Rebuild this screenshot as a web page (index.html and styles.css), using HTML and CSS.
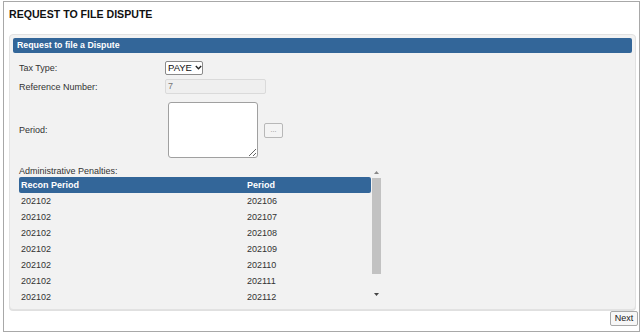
FILE: index.html
```html
<!DOCTYPE html>
<html>
<head>
<meta charset="utf-8">
<link rel="stylesheet" href="styles.css">
</head>
<body>
<div class="frame">
  <h1 class="title">REQUEST TO FILE DISPUTE</h1>
  <div class="panel">
    <div class="panel-head">Request to file a Dispute</div>
    <div class="row row-tax">
      <div class="label">Tax Type:</div>
      <div class="select"><span>PAYE</span><svg width="7" height="5" viewBox="0 0 7 5"><path d="M0.8 1 L3.5 3.7 L6.2 1" fill="none" stroke="#222" stroke-width="1.4"/></svg></div>
    </div>
    <div class="row row-ref">
      <div class="label">Reference Number:</div>
      <div class="input-disabled">7</div>
    </div>
    <div class="row row-period">
      <div class="label">Period:</div>
      <textarea class="area"></textarea>
      <div class="dots">...</div>
    </div>
    <div class="scrollbox">
      <div class="list">
        <div class="list-label">Administrative Penalties:</div>
        <div class="thead"><div class="c1">Recon Period</div><div class="c2">Period</div></div>
        <div class="tr"><div class="c1">202102</div><div class="c2">202106</div></div>
        <div class="tr"><div class="c1">202102</div><div class="c2">202107</div></div>
        <div class="tr"><div class="c1">202102</div><div class="c2">202108</div></div>
        <div class="tr"><div class="c1">202102</div><div class="c2">202109</div></div>
        <div class="tr"><div class="c1">202102</div><div class="c2">202110</div></div>
        <div class="tr"><div class="c1">202102</div><div class="c2">202111</div></div>
        <div class="tr"><div class="c1">202102</div><div class="c2">202112</div></div>
      </div>
      <div class="vbar">
        <div class="arrow-zone up"><svg width="5" height="3" viewBox="0 0 5 3"><path d="M0 3 L2.5 0 L5 3 Z" fill="#888"/></svg></div>
        <div class="thumb"></div>
        <div class="arrow-zone down"><svg width="5" height="3" viewBox="0 0 5 3"><path d="M0 0 L2.5 3 L5 0 Z" fill="#444"/></svg></div>
      </div>
    </div>
  </div>
  <div class="actions"><div class="btn-next">Next</div></div>
</div>
</body>
</html>
```
FILE: styles.css
```css
* { box-sizing: border-box; }
html, body { margin: 0; padding: 0; background: #fff; }
body { font-family: "Liberation Sans", Arial, sans-serif; color: #333; }

.frame {
  margin: 1px 0 0 3px;
  width: 637px;
  height: 331px;
  border: 1px solid #a8a8a8;
}

.title {
  margin: 0;
  padding: 5px 0 0 5px;
  font-size: 10.6px;
  line-height: 14px;
  font-weight: bold;
  color: #111;
}

.panel {
  margin: 13px 3px 0 5px;
  height: 276px;
  background: #f2f2f2;
  border: 1px solid #e2e2e2;
  border-radius: 4px;
  padding: 3px 3px 5px 3px;
  box-shadow: 0 1px 0 #e0e0e0;
}

.panel-head {
  height: 15px;
  line-height: 15px;
  background: #336699;
  border-radius: 2px;
  color: #fff;
  font-weight: bold;
  font-size: 8.8px;
  padding-left: 4px;
}

.row {
  display: flex;
  align-items: center;
  padding-left: 6px;
  font-size: 9px;
}
.label { width: 146px; flex: none; color: #333; }

.row-tax { margin-top: 7px; height: 15px; }
.row-ref { margin-top: 4px; height: 15px; }
.row-period { margin-top: 8px; height: 56px; }

.select {
  display: flex;
  align-items: center;
  gap: 3px;
  height: 14px;
  width: 38px;
  padding-left: 2px;
  background: #fff;
  border: 1px solid #8a8a8a;
  border-radius: 2px;
  font-size: 9.5px;
  color: #111;
}

.input-disabled {
  width: 101px;
  height: 15px;
  line-height: 13px;
  padding-left: 2px;
  background: #efefef;
  border: 1px solid #dadada;
  border-radius: 2px;
  color: #777;
  font-size: 9px;
}

.area {
  margin: 0 0 0 3px;
  width: 90px;
  height: 56px;
  background: #fff;
  border: 1px solid #a0a0a0;
  border-radius: 3px;
  padding: 0;
  font-family: inherit;
}

.dots {
  margin-left: 6px;
  width: 19px;
  height: 15px;
  border: 1px solid #b8b8b8;
  border-radius: 2px;
  background: #f4f4f4;
  color: #888;
  font-size: 7px;
  line-height: 12px;
  text-align: center;
}

.scrollbox {
  margin-top: 8px;
  height: 138px;
  display: flex;
  overflow: hidden;
  padding-left: 6px;
}

.list { width: 353px; flex: none; font-size: 9px; }

.list-label { height: 11px; line-height: 11px; color: #333; }

.thead, .tr { display: flex; height: 16px; line-height: 16px; width: 352px; }
.thead {
  background: #336699;
  border-radius: 2px;
  color: #fff;
  font-weight: bold;
}
.c1 { width: 228px; padding-left: 2px; flex: none; }
.c2 { flex: 1; }
.tr { color: #333; }

.vbar {
  width: 9px;
  flex: none;
  display: flex;
  flex-direction: column;
}
.arrow-zone { display: flex; justify-content: center; }
.arrow-zone.up { height: 12px; align-items: flex-start; padding-top: 5px; }
.arrow-zone.down { height: 30px; align-items: flex-start; padding-top: 19px; }
.thumb { height: 96px; background: #c2c2c2; }

.actions {
  display: flex;
  justify-content: flex-end;
  margin-top: 1px;
  padding-right: 1px;
}
.btn-next {
  width: 28px;
  height: 15px;
  line-height: 13px;
  border: 1px solid #a8a8a8;
  border-radius: 2px;
  background: #f7f7f7;
  font-size: 9px;
  color: #222;
  text-align: center;
}
```
